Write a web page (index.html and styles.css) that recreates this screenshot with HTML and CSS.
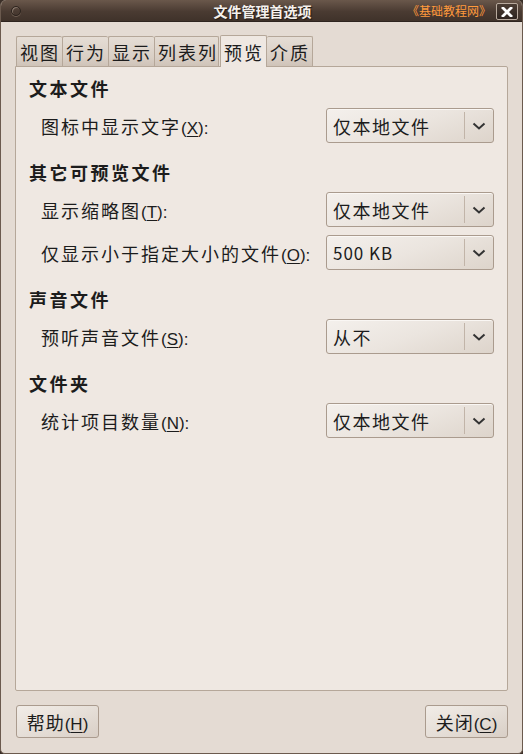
FILE: index.html
```html
<!DOCTYPE html>
<html lang="zh-CN">
<head>
    <meta charset="UTF-8">
    <title>文件管理首选项</title>
    <link rel="stylesheet" href="styles.css">
</head>
<body>

    <div class="window">
        <!-- Title bar -->
        <div class="titlebar">
            <span class="menu-dot"></span>
            <span class="title">文件管理首选项</span>
            <span class="close-btn">
                <svg width="12" height="10" viewBox="0 0 12 10">
                    <path d="M2 1 L10 9 M10 1 L2 9" stroke="#fff" stroke-width="2.8" stroke-linecap="square"/>
                </svg>
            </span>
            <span class="stamp">《基础教程网》</span>
        </div>

        <div class="content">
            <!-- Tabs -->
            <div class="tabs">
                <div class="tab">视图</div>
                <div class="tab">行为</div>
                <div class="tab">显示</div>
                <div class="tab">列表列</div>
                <div class="tab active">预览</div>
                <div class="tab">介质</div>
            </div>

            <div class="panel">
                <div class="section">
                    <div class="heading">文本文件</div>
                    <div class="row">
                        <span class="label">图标中显示文字<span class="mn">(<u>X</u>):</span></span>
                        <div class="combo"><span class="value">仅本地文件</span><span class="arrow"><svg width="14" height="8" viewBox="0 0 14 8"><path d="M1.5 1.5 L7 6.5 L12.5 1.5" fill="none" stroke="#333" stroke-width="2"/></svg></span></div>
                    </div>
                </div>

                <div class="section">
                    <div class="heading">其它可预览文件</div>
                    <div class="row">
                        <span class="label">显示缩略图<span class="mn">(<u>T</u>):</span></span>
                        <div class="combo"><span class="value">仅本地文件</span><span class="arrow"><svg width="14" height="8" viewBox="0 0 14 8"><path d="M1.5 1.5 L7 6.5 L12.5 1.5" fill="none" stroke="#333" stroke-width="2"/></svg></span></div>
                    </div>
                    <div class="row">
                        <span class="label">仅显示小于指定大小的文件<span class="mn">(<u>O</u>):</span></span>
                        <div class="combo"><span class="value latin">500 KB</span><span class="arrow"><svg width="14" height="8" viewBox="0 0 14 8"><path d="M1.5 1.5 L7 6.5 L12.5 1.5" fill="none" stroke="#333" stroke-width="2"/></svg></span></div>
                    </div>
                </div>

                <div class="section">
                    <div class="heading">声音文件</div>
                    <div class="row">
                        <span class="label">预听声音文件<span class="mn">(<u>S</u>):</span></span>
                        <div class="combo"><span class="value">从不</span><span class="arrow"><svg width="14" height="8" viewBox="0 0 14 8"><path d="M1.5 1.5 L7 6.5 L12.5 1.5" fill="none" stroke="#333" stroke-width="2"/></svg></span></div>
                    </div>
                </div>

                <div class="section">
                    <div class="heading">文件夹</div>
                    <div class="row">
                        <span class="label">统计项目数量<span class="mn">(<u>N</u>):</span></span>
                        <div class="combo"><span class="value">仅本地文件</span><span class="arrow"><svg width="14" height="8" viewBox="0 0 14 8"><path d="M1.5 1.5 L7 6.5 L12.5 1.5" fill="none" stroke="#333" stroke-width="2"/></svg></span></div>
                    </div>
                </div>
            </div>

            <!-- Dialog buttons -->
            <div class="buttons">
                <button class="btn">帮助<span class="mn">(<u>H</u>)</span></button>
                <button class="btn">关闭<span class="mn">(<u>C</u>)</span></button>
            </div>
        </div>
    </div>

</body>
</html>
```

FILE: styles.css
```css
body {
    margin: 0;
    font-family: "Noto Sans CJK SC", "DejaVu Sans", sans-serif;
    color: #1c1c1c;
    background: #3b2f28;
}

.window {
    width: 523px;
    height: 754px;
    box-sizing: border-box;
    display: flex;
    flex-direction: column;
    background: #e4dbd3;
    border: 1px solid #6b5a4e;
    border-top: none;
    border-radius: 6px 6px 5px 5px;
    overflow: hidden;
}

.titlebar {
    position: relative;
    height: 22px;
    flex: none;
    display: flex;
    align-items: center;
    justify-content: center;
    background: linear-gradient(to bottom, #6a584b, #4a3b32 55%, #3f322a);
    border-bottom: 1px solid #2e241f;
    box-sizing: border-box;
}

.menu-dot {
    position: absolute;
    left: 10px;
    top: 6px;
    width: 8px;
    height: 8px;
    border-radius: 50%;
    border: 1px solid #2d241e;
    box-shadow: inset 1px 1px 0 #8a7a6e, 0 1px 0 #6f5e52;
}

.title {
    font-size: 14px;
    font-weight: bold;
    color: #f4f0ec;
    text-shadow: 1px 1px 1px #1f1813;
    margin-left: 2px;
}

.close-btn {
    position: absolute;
    right: 4px;
    top: 3px;
    width: 20px;
    height: 15px;
    display: flex;
    align-items: center;
    justify-content: center;
    background: linear-gradient(to bottom, #4a3c33, #2e241f);
    border: 1px solid #b8aa9e;
    border-radius: 2px;
}

.stamp {
    position: absolute;
    left: 406px;
    top: 4px;
    font-size: 12px;
    line-height: 14px;
    color: #ff9a3c;
}

.content {
    flex: 1;
    display: flex;
    flex-direction: column;
    padding: 13px 14px 15px 14px;
}

.tabs {
    display: flex;
    align-items: flex-end;
    height: 31px;
    padding-left: 1px;
}

.tab {
    height: 30px;
    box-sizing: border-box;
    display: flex;
    align-items: center;
    padding: 0 2px 0 3px;
    font-size: 18px;
    letter-spacing: 2px;
    background: linear-gradient(to bottom, #e5ddd5, #d9cfc5 70%, #cfc3b8);
    border: 1px solid #b5a799;
    border-bottom: none;
    border-right: none;
    border-radius: 2px 2px 0 0;
}

.tab:nth-child(4) {
    border-right: 1px solid #b5a799;
    padding-right: 0;
}

.tab.active {
    height: 32px;
    margin-left: 1px;
    background: #efe8e2;
    border: 1px solid #b5a799;
    border-bottom: none;
    position: relative;
    top: 1px;
    z-index: 1;
}

.tab.active + .tab {
    border-left: none;
    border-right: 1px solid #b5a799;
}

.panel {
    flex: 1;
    background: #efe8e2;
    border: 1px solid #b5a799;
    border-radius: 0 2px 2px 2px;
    padding: 10px 13px 0 13px;
    display: flex;
    flex-direction: column;
    gap: 18px;
}

.section {
    display: flex;
    flex-direction: column;
    gap: 8px;
}

.heading {
    font-size: 18px;
    font-weight: bold;
    letter-spacing: 2.5px;
    line-height: 22px;
}

.section .heading + .row {
    margin-top: 1px;
}

.row {
    display: flex;
    align-items: center;
    justify-content: space-between;
    padding-left: 12px;
}

.label {
    font-size: 18px;
    letter-spacing: 2px;
}

.mn {
    letter-spacing: 0;
    font-family: "Liberation Sans", sans-serif;
    font-size: 17px;
}

.mn u {
    text-underline-offset: 2px;
}

.combo {
    width: 168px;
    height: 35px;
    box-sizing: border-box;
    display: flex;
    align-items: center;
    background: linear-gradient(160deg, #f4f0ec, #ebe5df 50%, #ddd4cb);
    border: 1px solid #aa9b8e;
    border-radius: 3px;
    box-shadow: inset 0 1px 0 #faf7f4;
}

.combo .value {
    flex: 1;
    padding-left: 6px;
    font-size: 18px;
    letter-spacing: 1.5px;
}

.combo .value.latin {
    font-size: 17px;
    letter-spacing: 1px;
}

.combo .arrow {
    width: 28px;
    height: 27px;
    display: flex;
    align-items: center;
    justify-content: center;
    border-left: 1px solid #c1b4a8;
}

.buttons {
    display: flex;
    justify-content: space-between;
    padding-top: 14px;
    padding-left: 1px;
}

.btn {
    width: 83px;
    height: 33px;
    font-family: "Noto Sans CJK SC", "DejaVu Sans", sans-serif;
    font-size: 18px;
    letter-spacing: 1px;
    color: #1c1c1c;
    background: linear-gradient(160deg, #f1ece7, #e6dfd8 50%, #d9cfc6);
    border: 1px solid #aa9b8e;
    border-radius: 3px;
    padding: 0;
}
```
